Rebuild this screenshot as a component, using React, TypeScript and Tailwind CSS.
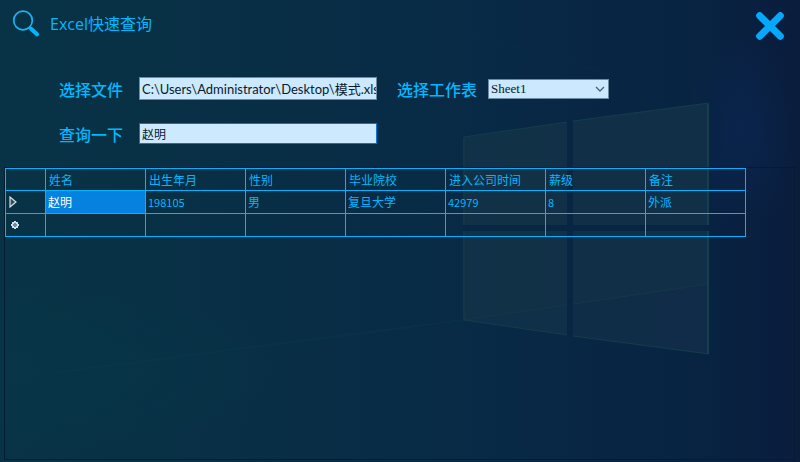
import { useState } from 'react';

const columns = ['姓名', '出生年月', '性别', '毕业院校', '进入公司时间', '薪级', '备注'];

const rows = [['赵明', '198105', '男', '复旦大学', '42979', '8', '外派']];

const isNumber = (value: string) => /^\d+$/.test(value);

function Wallpaper() {
  return (
    <svg
      className="absolute inset-0 -z-10 h-full w-full"
      viewBox="0 0 800 462"
      preserveAspectRatio="xMidYMid slice"
      aria-hidden="true"
    >
      <defs>
        <linearGradient id="base" x1="0" y1="0" x2="1" y2="0">
          <stop offset="0" stopColor="#083346" />
          <stop offset="0.35" stopColor="#082e45" />
          <stop offset="0.6" stopColor="#082a46" />
          <stop offset="0.85" stopColor="#082443" />
          <stop offset="1" stopColor="#0a1d3d" />
        </linearGradient>
        <radialGradient id="glow">
          <stop offset="0" stopColor="#0a2550" stopOpacity="0.8" />
          <stop offset="1" stopColor="#0a2550" stopOpacity="0" />
        </radialGradient>
        <radialGradient id="teal">
          <stop offset="0" stopColor="#063849" stopOpacity="0.6" />
          <stop offset="1" stopColor="#063849" stopOpacity="0" />
        </radialGradient>
      </defs>
      <rect width="800" height="462" fill="url(#base)" />
      <ellipse cx="30" cy="370" rx="260" ry="90" fill="url(#teal)" />
      <ellipse cx="740" cy="130" rx="55" ry="100" fill="url(#glow)" />
      <path d="M360 0L610 75" stroke="#0c3552" strokeOpacity="0.3" fill="none" />
      <path d="M60 372L463 320" stroke="#0b3f50" strokeOpacity="0.25" strokeWidth="2" fill="none" />

      {/* window panes */}
      <g fill="#153448" fillOpacity="0.7">
        <path d="M463 137L567 122V225H463Z" />
        <path d="M573 121L709 103V225H573Z" />
        <path d="M463 231H567V335L463 320Z" />
        <path d="M573 231H709V354L573 336Z" />
      </g>
      <path d="M567 225H573V231H567Z M567 122L573 121V336L567 335Z M463 225H709V231H463Z" fill="#082644" fillOpacity="0.6" />
      <path d="M463 320L567 305V335Z" fill="#102e49" fillOpacity="0.6" />
      <path d="M573 304L709 284V354L573 336Z" fill="#102c49" fillOpacity="0.6" />
      <g fill="none" stroke="#15424a" strokeOpacity="0.8">
        <path d="M463 320L567 305M573 304L709 284" strokeOpacity="0.5" />
        <path d="M464 225V137L567 122M573 121L709 103M464 231V320L567 335M573 336L709 354" />
        <path d="M708 104V225M708 231V354" stroke="#17454a" strokeWidth="2" />
      </g>
    </svg>
  );
}

function SearchIcon() {
  return (
    <svg className="h-7 w-7" viewBox="0 0 28 28" fill="none" stroke="#16b4f4" aria-hidden="true">
      <circle cx="11" cy="10.5" r="9.3" strokeWidth="1.7" />
      <path d="M17.3 17L20 19.5" strokeWidth="2.5" />
      <path d="M19.3 19L25 24.3" stroke="#00b4ff" strokeWidth="4.2" strokeLinecap="round" />
    </svg>
  );
}

function CloseIcon() {
  return (
    <svg className="h-7 w-7" viewBox="0 0 28 28" fill="none" aria-hidden="true">
      <path d="M3.7 3.7L24.3 24.3M24.3 3.7L3.7 24.3" stroke="#06a8fb" strokeWidth="7" strokeLinecap="round" />
    </svg>
  );
}

export default function App() {
  const [file, setFile] = useState('C:\\Users\\Administrator\\Desktop\\模式.xls');
  const [sheet, setSheet] = useState('Sheet1');
  const [query, setQuery] = useState('赵明');

  return (
    <div className="relative isolate flex min-h-screen flex-col overflow-hidden bg-[#082b46] font-['Noto_Sans_CJK_SC',sans-serif] text-[#00b8ff]">
      <Wallpaper />

      <header className="flex items-start justify-between pt-2 pr-4 pl-3">
        <div className="flex items-center gap-2.5 pt-0.5">
          <SearchIcon />
          <h1 className="font-['Open_Sans','Noto_Sans_CJK_SC',sans-serif] text-base leading-7">Excel快速查询</h1>
        </div>
        <button type="button" aria-label="关闭" className="pt-1">
          <CloseIcon />
        </button>
      </header>

      <form
        className="flex flex-col gap-[23px] pt-[37px] pl-[59px]"
        onSubmit={(e) => e.preventDefault()}
      >
        <div className="flex items-center">
          <label htmlFor="file" className="w-20 text-base leading-5 font-medium">
            选择文件
          </label>
          <input
            id="file"
            type="text"
            value={file}
            onChange={(e) => setFile(e.target.value)}
            className="h-[23px] w-[238px] border border-[#6d8ba3] bg-[#cce9fd] pr-0 pl-0.5 font-['Lato','Noto_Sans_CJK_SC',sans-serif] text-[13px] text-[#0a1a2c] outline-none"
          />
          <label htmlFor="sheet" className="ml-5 w-[91px] text-base leading-5 font-medium">
            选择工作表
          </label>
          <div className="relative">
            <select
              id="sheet"
              value={sheet}
              onChange={(e) => setSheet(e.target.value)}
              className="block h-5 w-[121px] appearance-none border border-[#6d8ba3] bg-[#cce8ff] px-0.5 font-['Liberation_Serif',serif] text-[13px] leading-4 text-[#0a1a2c] outline-none"
            >
              <option>Sheet1</option>
            </select>
            <svg
              className="pointer-events-none absolute top-1.5 right-1 h-2 w-2.5"
              viewBox="0 0 10 8"
              fill="none"
              stroke="#4c6274"
              strokeWidth="1.3"
              aria-hidden="true"
            >
              <path d="M1 2L5 6L9 2" />
            </svg>
          </div>
        </div>

        <div className="flex items-center">
          <label htmlFor="query" className="w-20 text-base leading-5 font-medium">
            查询一下
          </label>
          <input
            id="query"
            type="text"
            value={query}
            onChange={(e) => setQuery(e.target.value)}
            className="h-[21px] w-[238px] border border-[#0078d7] bg-[#cce9fd] px-0.5 text-xs text-[#0a1a2c] outline-none"
          />
        </div>
      </form>

      <main className="mt-[23px] mr-[5px] mb-0.5 ml-1 flex-1 border border-[#041c30]">
        <table className="w-[741px] table-fixed border-collapse text-left text-xs leading-4">
          <colgroup>
            <col className="w-10" />
            {columns.map((name) => (
              <col key={name} className="w-[100px]" />
            ))}
          </colgroup>
          <thead>
            <tr className="h-[22px]">
              <th className="border border-[#00b4ff] p-0" />
              {columns.map((name) => (
                <th key={name} className="border border-[#00b4ff] p-0 pl-[3px] font-normal">
                  {name}
                </th>
              ))}
            </tr>
          </thead>
          <tbody>
            {rows.map((row, r) => (
              <tr key={r} className="h-[23px]">
                <td className="border border-[#00b4ff] p-0 pl-[3px]">
                  <svg className="block h-3 w-2" viewBox="0 0 8 12" aria-hidden="true">
                    <path d="M1 1V11L7 6Z" fill="#34505f" stroke="#d2e2ea" strokeWidth="1.2" />
                  </svg>
                </td>
                {row.map((value, c) => (
                  <td
                    key={c}
                    className={`border border-[#00b4ff] p-0 pl-0.5 ${c === 0 ? 'bg-[#0581e0] text-white' : ''} ${isNumber(value) ? 'text-[11px]' : ''}`}
                  >
                    {value}
                  </td>
                ))}
              </tr>
            ))}
            <tr className="h-[23px]">
              <td className="border border-[#00b4ff] p-0 pl-[5px]">
                <svg className="block h-2 w-2" viewBox="0 0 8 8" aria-hidden="true">
                  <path d="M3 0H5V1H7V3H8V5H7V7H5V8H3V7H1V5H0V3H1V1H3Z" fill="#d2e2ea" />
                  <path d="M3 2H5V3H6V5H5V6H3V5H2V3H3Z" fill="#6f8b98" />
                </svg>
              </td>
              {columns.map((name) => (
                <td key={name} className="border border-[#00b4ff] p-0" />
              ))}
            </tr>
          </tbody>
        </table>
      </main>
    </div>
  );
}
